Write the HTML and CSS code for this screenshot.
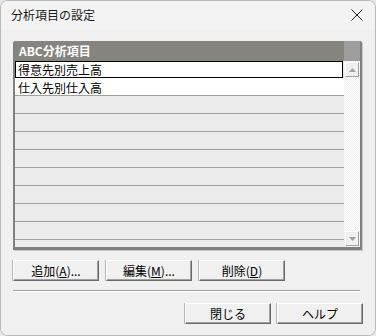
FILE: index.html
```html
<!DOCTYPE html>
<html lang="ja">
<head>
<meta charset="utf-8">
<link rel="stylesheet" href="styles.css">
</head>
<body>
<div class="window">
  <div class="titlebar">
    <span class="title">分析項目の設定</span>
    <svg class="close" width="12" height="12" viewBox="0 0 12 12"><path d="M0.5 0.5 L11.5 11.5 M11.5 0.5 L0.5 11.5" stroke="#222" stroke-width="1" fill="none"/></svg>
  </div>
  <div class="content">
    <div class="listbox">
      <div class="list-main">
        <div class="list-header">ABC分析項目</div>
        <div class="row filled selected">得意先別売上高</div>
        <div class="row filled">仕入先別仕入高</div>
        <div class="row"></div>
        <div class="row"></div>
        <div class="row"></div>
        <div class="row"></div>
        <div class="row"></div>
        <div class="row"></div>
        <div class="row"></div>
        <div class="row"></div>
      </div>
      <div class="scrollbar">
        <div class="sb-head"></div>
        <div class="sb-btn"><svg width="7" height="4" viewBox="0 0 7 4"><path d="M3.5 0 L7 4 L0 4 Z" fill="#a0a0a0"/></svg></div>
        <div class="sb-track"></div>
        <div class="sb-btn"><svg width="7" height="4" viewBox="0 0 7 4"><path d="M0 0 L7 0 L3.5 4 Z" fill="#a0a0a0"/></svg></div>
      </div>
    </div>
    <div class="btn-row">
      <button class="btn">追加(<u>A</u>)...</button>
      <button class="btn">編集(<u>M</u>)...</button>
      <button class="btn">削除(<u>D</u>)</button>
    </div>
    <div class="separator"></div>
    <div class="btn-row end">
      <button class="btn">閉じる</button>
      <button class="btn">ヘルプ</button>
    </div>
  </div>
</div>
</body>
</html>
```
FILE: styles.css
```css
html, body {
  margin: 0;
  padding: 0;
  background: #e6e6e6;
}
body {
  font-family: "Noto Sans CJK JP", "Noto Sans", sans-serif;
  font-size: 12px;
  color: #000;
}
.window {
  width: 376px;
  height: 336px;
  box-sizing: border-box;
  border: 1px solid #b9b9b9;
  border-radius: 8px;
  overflow: hidden;
  background: #f0f0f0;
  display: flex;
  flex-direction: column;
}
.titlebar {
  height: 29px;
  flex: none;
  background: #f3f3f3;
  display: flex;
  align-items: center;
  justify-content: space-between;
  padding: 0 12px 0 10px;
}
.title {
  font-size: 12px;
  line-height: 14px;
  color: #1a1a1a;
  margin-top: -1px;
}
.close {
  display: block;
  margin-top: -1px;
}
.content {
  flex: 1;
  padding: 11px 13px 0 12px;
  background: #f0f0f0;
}
.listbox {
  height: 209px;
  box-sizing: border-box;
  border-left: 2px solid #818181;
  border-right: 2px solid #818181;
  border-bottom: 3px solid #818181;
  border-top-left-radius: 2px;
  border-top-right-radius: 2px;
  display: flex;
  background: #ebebeb;
  box-shadow: 1px 1px 0 #c8c8c8;
}
.list-main {
  flex: 1;
  display: flex;
  flex-direction: column;
  min-width: 0;
}
.list-header {
  height: 20px;
  flex: none;
  background: #85847f;
  color: #fff;
  font-weight: bold;
  line-height: 20px;
  padding-left: 4px;
}
.row {
  height: 17px;
  flex: none;
  border-bottom: 1px solid #a0a0a0;
  background: #ebebeb;
  line-height: 17px;
  padding-left: 3px;
  box-sizing: content-box;
}
.row.filled {
  background: #fff;
}
.row.selected {
  height: 15px;
  line-height: 15px;
  border: 1px solid #000;
  margin-right: 1px;
  padding-left: 2px;
  border-bottom-color: #000;
}
.row.selected + .row {
  border-top: 1px solid #fff;
  height: 16px;
}
.scrollbar {
  width: 16px;
  flex: none;
  display: flex;
  flex-direction: column;
  background-color: #fbfbfb;
  background-image: repeating-conic-gradient(#ececec 0 25%, #ffffff 0 50%);
  background-size: 2px 2px;
}
.sb-head {
  height: 20px;
  flex: none;
  background: #9e9e9e;
}
.sb-btn {
  height: 15px;
  width: 14px;
  flex: none;
  margin: 1px 1px 1px 1px;
  box-sizing: border-box;
  background: #f0f0f0;
  border-top: 1px solid #fff;
  border-left: 1px solid #fff;
  border-right: 1px solid #a0a0a0;
  border-bottom: 1px solid #a0a0a0;
  display: flex;
  align-items: center;
  justify-content: center;
}
.sb-track {
  flex: 1;
}
.btn-row {
  display: flex;
  gap: 7px;
  margin-top: 10px;
}
.btn-row.end {
  justify-content: flex-end;
  gap: 6px;
  margin-top: 11px;
  margin-right: -1px;
}
.btn {
  width: 86px;
  height: 21px;
  box-sizing: border-box;
  padding: 0;
  margin: 0;
  font-family: "Noto Sans CJK JP", "Noto Sans", sans-serif;
  font-size: 12px;
  line-height: 17px;
  color: #000;
  background: #f0f0f0;
  border-top: 1px solid #ffffff;
  border-left: 1px solid #ffffff;
  border-right: 1px solid #696969;
  border-bottom: 1px solid #696969;
  box-shadow: inset -1px -1px 0 #a0a0a0, -1px 0 0 #b4b4b4;
}
.btn u {
  text-underline-offset: 1px;
}
.separator {
  height: 1px;
  margin-top: 9px;
  margin-right: 2px;
  border-top: 1px solid #a0a0a0;
  border-bottom: 1px solid #ffffff;
  height: 0;
}
```
